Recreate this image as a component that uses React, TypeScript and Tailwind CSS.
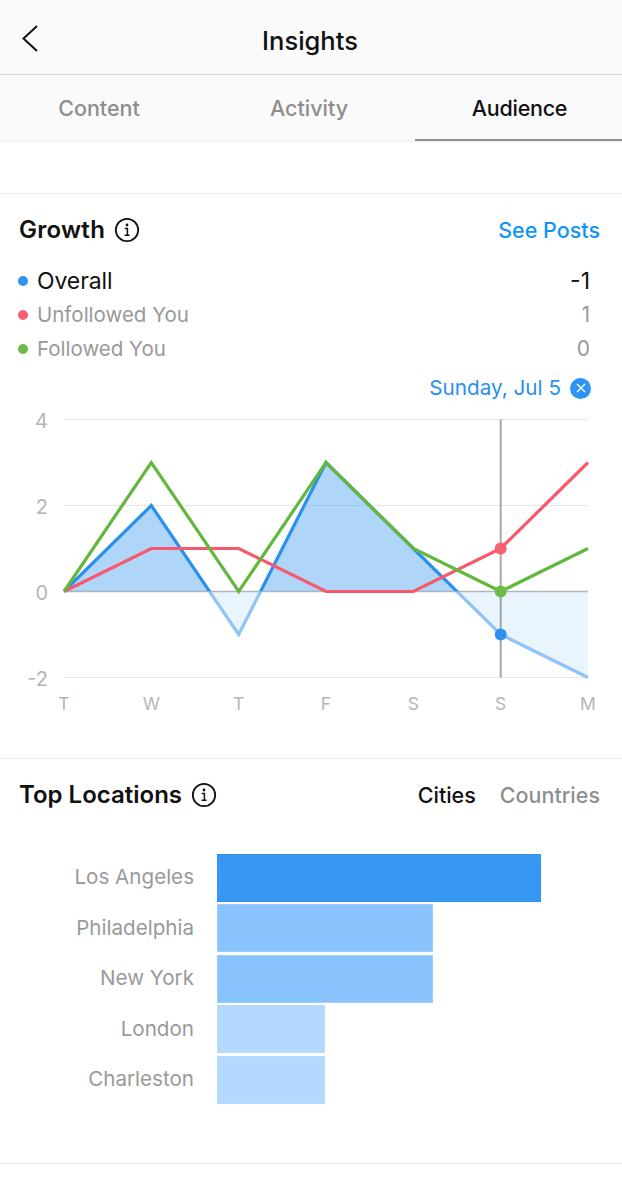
const font = { fontFamily: "Inter, 'Noto Sans', sans-serif" };

const xs = [64, 151.3, 238.7, 326, 413.3, 500.7, 588];
const yOf = (v: number) => 183.5 - v * 43;
const blue = [0, 2, -1, 3, 1, -1, -2];
const red = [0, 1, 1, 0, 0, 1, 3];
const green = [0, 3, 0, 3, 1, 0, 1];
const pts = (s: number[]) => s.map((v, i) => `${xs[i]},${yOf(v)}`).join(" ");
const zero = yOf(0);

function Info() {
  return (
    <svg width="26" height="26" viewBox="0 0 26 26" fill="none" className="shrink-0">
      <circle cx="13" cy="13" r="11.2" stroke="#111" strokeWidth="1.8" />
      <circle cx="13" cy="8" r="1.4" fill="#111" />
      <path d="M10.8 11.4H13.4V18M10.6 18.2H15.6" stroke="#111" strokeWidth="1.5" />
    </svg>
  );
}

function Legend({ color, label, value, active }: { color: string; label: string; value: string; active?: boolean }) {
  return (
    <div className="flex items-center h-[34px]">
      <span className="w-[10px] h-[10px] rounded-full mr-[9px] shrink-0" style={{ backgroundColor: color }} />
      <span className={active ? "text-[23px] text-[#111] flex-1 tracking-[-0.1px]" : "text-[20.5px] text-[#999] flex-1"}>{label}</span>
      <span className={active ? "text-[23px] text-[#111]" : "text-[21px] text-[#999]"}>{value}</span>
    </div>
  );
}

function Chart() {
  const labels = ["T", "W", "T", "F", "S", "S", "M"];
  return (
    <svg width="622" height="310" viewBox="0 0 622 310" className="block">
      <defs>
        <clipPath id="above"><rect x="0" y="0" width="622" height={zero} /></clipPath>
        <clipPath id="below"><rect x="0" y={zero} width="622" height="200" /></clipPath>
      </defs>
      {[4, 2, -2].map((v) => (
        <line key={v} x1="64" x2="588" y1={yOf(v)} y2={yOf(v)} stroke="#e6e6e6" strokeWidth="1.2" />
      ))}
      <line x1="64" x2="588" y1={zero} y2={zero} stroke="#bcbcbc" strokeWidth="1.5" />
      {[4, 2, 0, -2].map((v) => (
        <text key={v} x="48" y={yOf(v) + 8} textAnchor="end" fontSize="20" fill="#b5b5b5" style={font}>{v}</text>
      ))}
      {labels.map((l, i) => (
        <text key={i} x={xs[i]} y="302" textAnchor="middle" fontSize="17.5" fill="#b5b5b5" style={font}>{l}</text>
      ))}
      <line x1={xs[5]} x2={xs[5]} y1={yOf(4)} y2={yOf(-2)} stroke="#a8a8a8" strokeWidth="2" />
      <polygon clipPath="url(#above)" points={`64,${zero} ${pts(blue)} 588,${zero}`} fill="#3897f0" fillOpacity="0.4" />
      <polygon clipPath="url(#below)" points={`64,${zero} ${pts(blue)} 588,${zero}`} fill="#3897f0" fillOpacity="0.11" />
      <polyline clipPath="url(#above)" points={pts(blue)} fill="none" stroke="#2a90ee" strokeWidth="3.2" />
      <polyline clipPath="url(#below)" points={pts(blue)} fill="none" stroke="#8fc4f7" strokeWidth="3.2" />
      <polyline points={pts(red)} fill="none" stroke="#f9586c" strokeWidth="3.2" />
      <polyline points={pts(green)} fill="none" stroke="#63b73c" strokeWidth="3.2" />
      <circle cx={xs[5]} cy={yOf(1)} r="6" fill="#f9606f" />
      <circle cx={xs[5]} cy={yOf(0)} r="6" fill="#6dbb46" />
      <circle cx={xs[5]} cy={yOf(-1)} r="6" fill="#2c93f0" />
    </svg>
  );
}

const bars = [
  { name: "Los Angeles", w: "w-[324px]", c: "bg-[#3897f0] border-[#2f93f2]" },
  { name: "Philadelphia", w: "w-[216px]", c: "bg-[#89c3fd] border-[#9ccdfd]" },
  { name: "New York", w: "w-[216px]", c: "bg-[#89c3fd] border-[#9ccdfd]" },
  { name: "London", w: "w-[108px]", c: "bg-[#b3d8ff] border-[#bcdcff]" },
  { name: "Charleston", w: "w-[108px]", c: "bg-[#b3d8ff] border-[#bcdcff]" },
];

export default function App() {
  return (
    <div className="w-[622px] h-[1178px] bg-white overflow-hidden" style={font}>
      <header className="relative h-[75px] bg-[#fafafa] border-b border-[#d4d4d4] flex items-center justify-center">
        <svg width="20" height="30" viewBox="0 0 20 30" fill="none" className="absolute left-[20px] top-[24px]">
          <path d="M17 2 L3.5 14.5 L17 27" stroke="#111" strokeWidth="2" />
        </svg>
        <h1 className="text-[25.5px] font-medium text-[#111] mt-[8px] mr-[2px]">Insights</h1>
      </header>
      <nav className="h-[67px] bg-[#fafafa] border-b border-[#f0f0f0] flex text-[21.5px] font-medium">
        <div className="w-[198px] flex items-center justify-center text-[#8e8e8e]">Content</div>
        <div className="w-[222px] flex items-center justify-center text-[#8e8e8e]">Activity</div>
        <div className="relative flex-1 flex items-center justify-center text-[#111] tracking-[-0.25px]">
          <span className="mr-[3px]">Audience</span>
          <span className="absolute right-0 bottom-0 w-[207px] h-[2px] bg-[#8e8e8e]" />
        </div>
      </nav>
      <div className="h-[51px]" />
      <section className="border-t border-[#ececec] h-[565px]">
        <div className="flex items-center justify-between pl-[19px] pr-[22px] pt-[12px] h-[60px]">
          <div className="flex items-center gap-[9px]">
            <h2 className="text-[24px] font-semibold text-[#111] tracking-[0.25px]">Growth</h2>
            <Info />
          </div>
          <span className="text-[21.5px] font-medium text-[#0f95f6]">See Posts</span>
        </div>
        <div className="pl-[18px] pr-[32px] pt-[10px]">
          <Legend color="#2f93f2" label="Overall" value="-1" active />
          <Legend color="#f9606f" label="Unfollowed You" value="1" />
          <Legend color="#6dbb46" label="Followed You" value="0" />
        </div>
        <div className="flex items-center justify-end pr-[31px] gap-[9px] h-[30px] mt-[7px]">
          <span className="text-[20.7px] text-[#2a90ee]">Sunday, Jul 5</span>
          <span className="w-[21px] h-[21px] rounded-full bg-[#2f93f2] flex items-center justify-center">
            <svg width="12" height="12" viewBox="0 0 12 12" fill="none">
              <path d="M2 2 L10 10 M10 2 L2 10" stroke="#fff" strokeWidth="1.4" />
            </svg>
          </span>
        </div>
        <div className="mt-[5px]"><Chart /></div>
      </section>
      <section className="border-t border-[#ececec] h-[405px]">
        <div className="flex items-center justify-between pl-[19px] pr-[22px] pt-[20px] h-[52px]">
          <div className="flex items-center gap-[9px]">
            <h2 className="text-[24px] font-semibold text-[#111]">Top Locations</h2>
            <Info />
          </div>
          <div className="flex gap-[24px] text-[21.5px] font-medium">
            <span className="text-[#111]">Cities</span>
            <span className="text-[#8e8e8e]">Countries</span>
          </div>
        </div>
        <div className="pt-[42.5px] flex flex-col gap-[2.6px]">
          {bars.map((b) => (
            <div key={b.name} className="flex items-center h-[48px]">
              <span className="w-[194px] text-right text-[20.6px] text-[#999]">{b.name}</span>
              <div className={`ml-[23px] h-full border ${b.w} ${b.c}`} />
            </div>
          ))}
        </div>
      </section>
      <div className="border-t border-[#ececec]" />
    </div>
  );
}
